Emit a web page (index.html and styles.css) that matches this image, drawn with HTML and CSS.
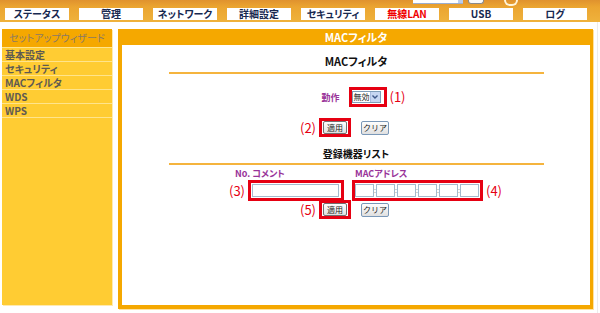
FILE: index.html
```html
<!DOCTYPE html>
<html lang="ja">
  <head>
    <meta charset="UTF-8" />
    <meta name="viewport" content="width=device-width, initial-scale=1.0" />
    <title>MACフィルタ</title>
    <link rel="stylesheet" href="styles.css">
  </head>
  <body>
    <div class="header">
      <div class="topbar">
        <span class="lang-box"><span class="lang-arrow"></span></span>
        <span class="go-btn"></span>
        <span class="logo-arc"></span>
      </div>
      <ul class="tabs">
        <li>ステータス</li>
        <li>管理</li>
        <li>ネットワーク</li>
        <li>詳細設定</li>
        <li>セキュリティ</li>
        <li class="active">無線LAN</li>
        <li>USB</li>
        <li>ログ</li>
      </ul>
    </div>

    <div class="layout">
      <div class="sidebar">
        <div class="side-title">セットアップウィザード</div>
        <ul class="side-menu">
          <li>基本設定</li>
          <li>セキュリティ</li>
          <li>MACフィルタ</li>
          <li>WDS</li>
          <li>WPS</li>
        </ul>
      </div>

      <div class="panel">
        <div class="panel-head">MACフィルタ</div>
        <div class="panel-body">
          <h3 class="sec-title">MACフィルタ</h3>
          <div class="rule"></div>

          <div class="mode-row">
            <span class="field-label">動作</span>
            <span class="mark mark-select">
              <span class="select">
                <span class="select-text">無効</span>
                <span class="select-arrow">
                  <svg width="8" height="8" viewBox="0 0 8 8">
                    <path d="M1.5 2.5 L4 5 L6.5 2.5" fill="none" stroke="#3d5688" stroke-width="1.4" />
                  </svg>
                </span>
              </span>
              <span class="note note-right">(1)</span>
            </span>
          </div>

          <div class="btn-row">
            <span class="mark mark-btn">
              <button class="btn" type="button">適用</button>
              <span class="note note-left">(2)</span>
            </span>
            <button class="btn btn-clear" type="button">クリア</button>
          </div>

          <h3 class="sec-title sec-title-2">登録機器リスト</h3>
          <div class="rule rule-2"></div>

          <div class="reg">
            <div class="reg-labels">
              <span class="field-label reg-label-1">No. コメント</span>
              <span class="field-label">MACアドレス</span>
            </div>
            <div class="reg-inputs">
              <span class="mark mark-comment">
                <input class="text-input comment-input" type="text" />
                <span class="note note-left">(3)</span>
              </span>
              <span class="mark mark-mac">
                <input class="text-input mac-input" type="text" /><span class="colon">:</span><input class="text-input mac-input" type="text" /><span class="colon">:</span><input class="text-input mac-input" type="text" /><span class="colon">:</span><input class="text-input mac-input" type="text" /><span class="colon">:</span><input class="text-input mac-input" type="text" /><span class="colon">:</span><input class="text-input mac-input" type="text" />
                <span class="note note-right">(4)</span>
              </span>
            </div>
          </div>

          <div class="btn-row btn-row-2">
            <span class="mark mark-btn">
              <button class="btn" type="button">適用</button>
              <span class="note note-left">(5)</span>
            </span>
            <button class="btn btn-clear" type="button">クリア</button>
          </div>
        </div>
      </div>
    </div>
  </body>
</html>
```

FILE: styles.css
```css
body {
  margin: 0;
  background: #fff;
  font-family: "Noto Sans CJK JP", "DejaVu Sans", sans-serif;
}
ul {
  list-style: none;
  margin: 0;
  padding: 0;
}
.header {
  height: 22px;
  background: linear-gradient(to bottom, #e0922e 0, #eba531 7px, #efb23c 22px);
}
.topbar {
  height: 8px;
  display: flex;
  align-items: flex-start;
  padding-left: 413px;
}
.lang-box {
  position: relative;
  width: 50px;
  height: 3px;
  background: #fff;
  border-bottom: 1px solid #9aaed0;
}
.lang-arrow {
  position: absolute;
  right: 0;
  top: 0;
  width: 5px;
  height: 3px;
  background: #b9cdee;
}
.go-btn {
  width: 14px;
  height: 3px;
  margin-left: 5px;
  background: #fafafa;
  border: 1px solid #8a8a8a;
  border-top: 0;
  border-radius: 0 0 3px 3px;
}
.logo-arc {
  width: 10px;
  height: 4px;
  margin-left: 20px;
  border: 2px solid #fff4d8;
  border-top: 0;
  border-radius: 0 0 8px 8px;
}
.tabs {
  display: flex;
  gap: 10px;
  padding-left: 5px;
}
.tabs li {
  width: 64px;
  height: 12px;
  background: #fff;
  color: #17284f;
  font-size: 10px;
  line-height: 12px;
  font-weight: bold;
  text-align: center;
  font-feature-settings: "palt";
}
.tabs li.active {
  color: #f00000;
}

.layout {
  display: flex;
  align-items: flex-start;
  gap: 6px;
  width: 598px;
  height: 291px;
  box-sizing: border-box;
  padding: 7px 0 0 2px;
  border-right: 1px solid #ececec;
}
.sidebar {
  width: 110px;
  height: 276px;
  background: #ffcc33;
  box-shadow: 1px 1px 0 #ffeab0;
}
.side-title {
  height: 18px;
  line-height: 18px;
  background: #f5a800;
  color: #8c7a64;
  font-size: 10px;
  text-align: center;
  font-feature-settings: "palt";
}
.side-menu li {
  height: 13px;
  line-height: 13px;
  padding-left: 3px;
  border-top: 1px solid #ffe48c;
  color: #5e5a52;
  font-size: 10px;
  font-weight: bold;
  font-feature-settings: "palt";
}
.side-menu li:last-child {
  border-bottom: 1px solid #ffe48c;
}

.panel {
  width: 468px;
  height: 276px;
  border: 4px solid #f5a800;
  border-top: 0;
  border-right-width: 3px;
  box-shadow: 1px 1px 0 #ffe2a0;
}
.panel-head {
  height: 16px;
  line-height: 16px;
  background: #f5a800;
  color: #fff;
  font-size: 11px;
  font-weight: bold;
  text-align: center;
  font-feature-settings: "palt";
}
.panel-body {
  padding-top: 9px;
  text-align: center;
}
.sec-title {
  margin: 0;
  font-size: 11px;
  line-height: 14px;
  font-weight: bold;
  color: #111;
  font-feature-settings: "palt";
}
.sec-title-2 {
  margin-top: 10px;
  font-size: 10px;
}
.rule {
  width: 375px;
  height: 2px;
  margin: 4px auto 0;
  background: #f5b43e;
}
.rule-2 {
  margin-top: 2px;
}

.field-label {
  color: #993399;
  font-size: 9px;
  font-weight: bold;
  font-feature-settings: "palt";
}
.mark {
  position: relative;
  display: inline-flex;
  align-items: center;
  border: 3px solid #e60012;
}
.note {
  position: absolute;
  top: 50%;
  transform: translateY(-50%);
  color: #e60012;
  font-size: 13px;
  line-height: 16px;
  white-space: nowrap;
}
.note-right {
  left: calc(100% + 6px);
}
.note-left {
  right: calc(100% + 6px);
}

.mode-row {
  display: flex;
  justify-content: center;
  align-items: center;
  height: 20px;
  margin-top: 13px;
  padding-right: 4px;
}
.mode-row .field-label {
  margin-right: 9px;
}
.mark-select {
  padding: 1px 3px 1px 0;
}
.select {
  display: flex;
  align-items: center;
  justify-content: space-between;
  width: 29px;
  height: 12px;
  box-sizing: border-box;
  border: 1px solid #7f9db9;
  background: #fff;
}
.select-text {
  padding-left: 1px;
  font-size: 8px;
  line-height: 10px;
  white-space: nowrap;
  color: #222;
}
.select-arrow {
  display: flex;
  align-items: center;
  justify-content: center;
  flex-shrink: 0;
  width: 9px;
  height: 10px;
  background: #c6d6f2;
  border-left: 1px solid #a9bde0;
}

.btn-row {
  display: flex;
  justify-content: center;
  align-items: center;
  gap: 10px;
  height: 19px;
  margin-top: 11px;
  padding-right: 4px;
}
.btn-row-2 {
  margin-top: -1px;
}
.mark-btn {
  padding: 0 1px;
}
.btn {
  width: 24px;
  height: 13px;
  box-sizing: border-box;
  padding: 0;
  border: 1px solid #707070;
  border-radius: 2px;
  background: linear-gradient(#fefefe, #e0e0e0);
  color: #222;
  font-family: "Noto Sans CJK JP", sans-serif;
  font-size: 8px;
  line-height: 11px;
}
.btn-clear {
  width: 28px;
  height: 14px;
  border-color: #7a98b8;
}

.reg {
  margin-left: 113px;
  text-align: left;
}
.reg-labels {
  display: flex;
  height: 10px;
  line-height: 10px;
  margin-top: 4px;
}
.reg-label-1 {
  width: 120px;
}
.reg-inputs {
  display: flex;
  align-items: flex-start;
  gap: 8px;
  margin-top: 1px;
  padding-left: 13px;
}
.mark-comment {
  padding: 1px 2px 1px 1px;
}
.mark-mac {
  padding: 1px 1px 1px 0;
}
.text-input {
  height: 13px;
  box-sizing: border-box;
  margin: 0;
  padding: 0;
  border: 1px solid #a5bacd;
  background: #fff;
}
.comment-input {
  width: 87px;
}
.mac-input {
  width: 19px;
}
.colon {
  width: 2px;
  overflow: visible;
  font-size: 7px;
  line-height: 13px;
  color: #888;
  text-align: center;
}
```
